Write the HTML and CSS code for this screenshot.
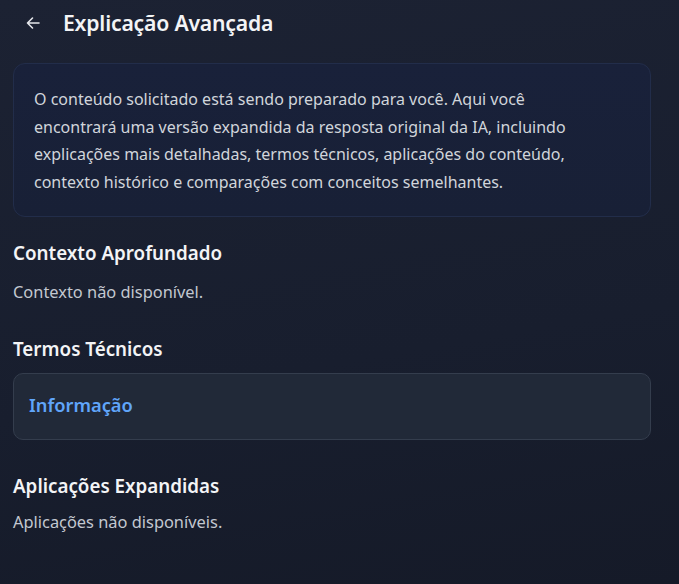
FILE: index.html
```html
<!DOCTYPE html>
<html lang="pt">
<head>
<meta charset="utf-8">
<link rel="stylesheet" href="styles.css">
</head>
<body>
<div class="page">
  <header class="header">
    <svg class="back" width="16" height="16" viewBox="0 0 16 16" fill="none" stroke="#e5e7eb" stroke-width="1.6" stroke-linecap="round" stroke-linejoin="round"><path d="M14 8H2.5M7.5 3L2.5 8l5 5"/></svg>
    <h1 class="title">Explicação Avançada</h1>
  </header>
  <div class="intro">
    <p>O conteúdo solicitado está sendo preparado para você. Aqui você encontrará uma versão expandida da resposta original da IA, incluindo explicações mais detalhadas, termos técnicos, aplicações do conteúdo, contexto histórico e comparações com conceitos semelhantes.</p>
  </div>
  <section class="section first">
    <h2>Contexto Aprofundado</h2>
    <p class="muted">Contexto não disponível.</p>
  </section>
  <section class="section">
    <h2>Termos Técnicos</h2>
    <div class="term"><span class="term-name">Informação</span></div>
  </section>
  <section class="section last">
    <h2>Aplicações Expandidas</h2>
    <p class="muted">Aplicações não disponíveis.</p>
  </section>
</div>
</body>
</html>
```

FILE: styles.css
```css
html, body { margin: 0; padding: 0; height: 100%; }
body {
  background: linear-gradient(170deg, #1c2233 0%, #181e2e 60%, #151a28 100%);
  font-family: "Segoe UI", "Noto Sans", "Open Sans", sans-serif;
  color: #e5e7eb;
  overflow: hidden;
}
.page { padding: 0 28px 0 13px; }
.header {
  display: flex; align-items: center; height: 45px; padding-left: 12px; gap: 22px;
}
.back { flex: none; }
.title { margin: 0; font-size: 21.2px; font-weight: 600; color: #f3f4f6; letter-spacing: -0.2px; }
.intro {
  margin-top: 18px;
  background: linear-gradient(180deg, #19213a 0%, #182036 100%);
  border: 1px solid #222d4a;
  border-radius: 12px;
  padding: 22px 20px 19px 20px;
}
.intro p { margin: 0; max-width: 565px; font-size: 16px; line-height: 27.7px; color: #d1d5db; }
.section { margin-top: 31px; }
.section.first { margin-top: 22px; }
.section.last { margin-top: 32px; }
.section h2 { margin: 0; font-size: 18.8px; font-weight: 600; color: #f3f4f6; line-height: 28px; }
.muted { margin: 13px 0 0; font-size: 16.4px; color: #c3c8d0; line-height: 24px; }
.last .muted { margin-top: 10px; }
.term {
  margin-top: 10px;
  background: #212938;
  border: 1px solid #343d4d;
  border-radius: 10px;
  height: 66px; display: flex; align-items: center; padding: 0 15px 3px;
  box-sizing: border-box; height: 67px;
}
.term-name { color: #60a5fa; font-size: 18.3px; font-weight: 600; }
```
